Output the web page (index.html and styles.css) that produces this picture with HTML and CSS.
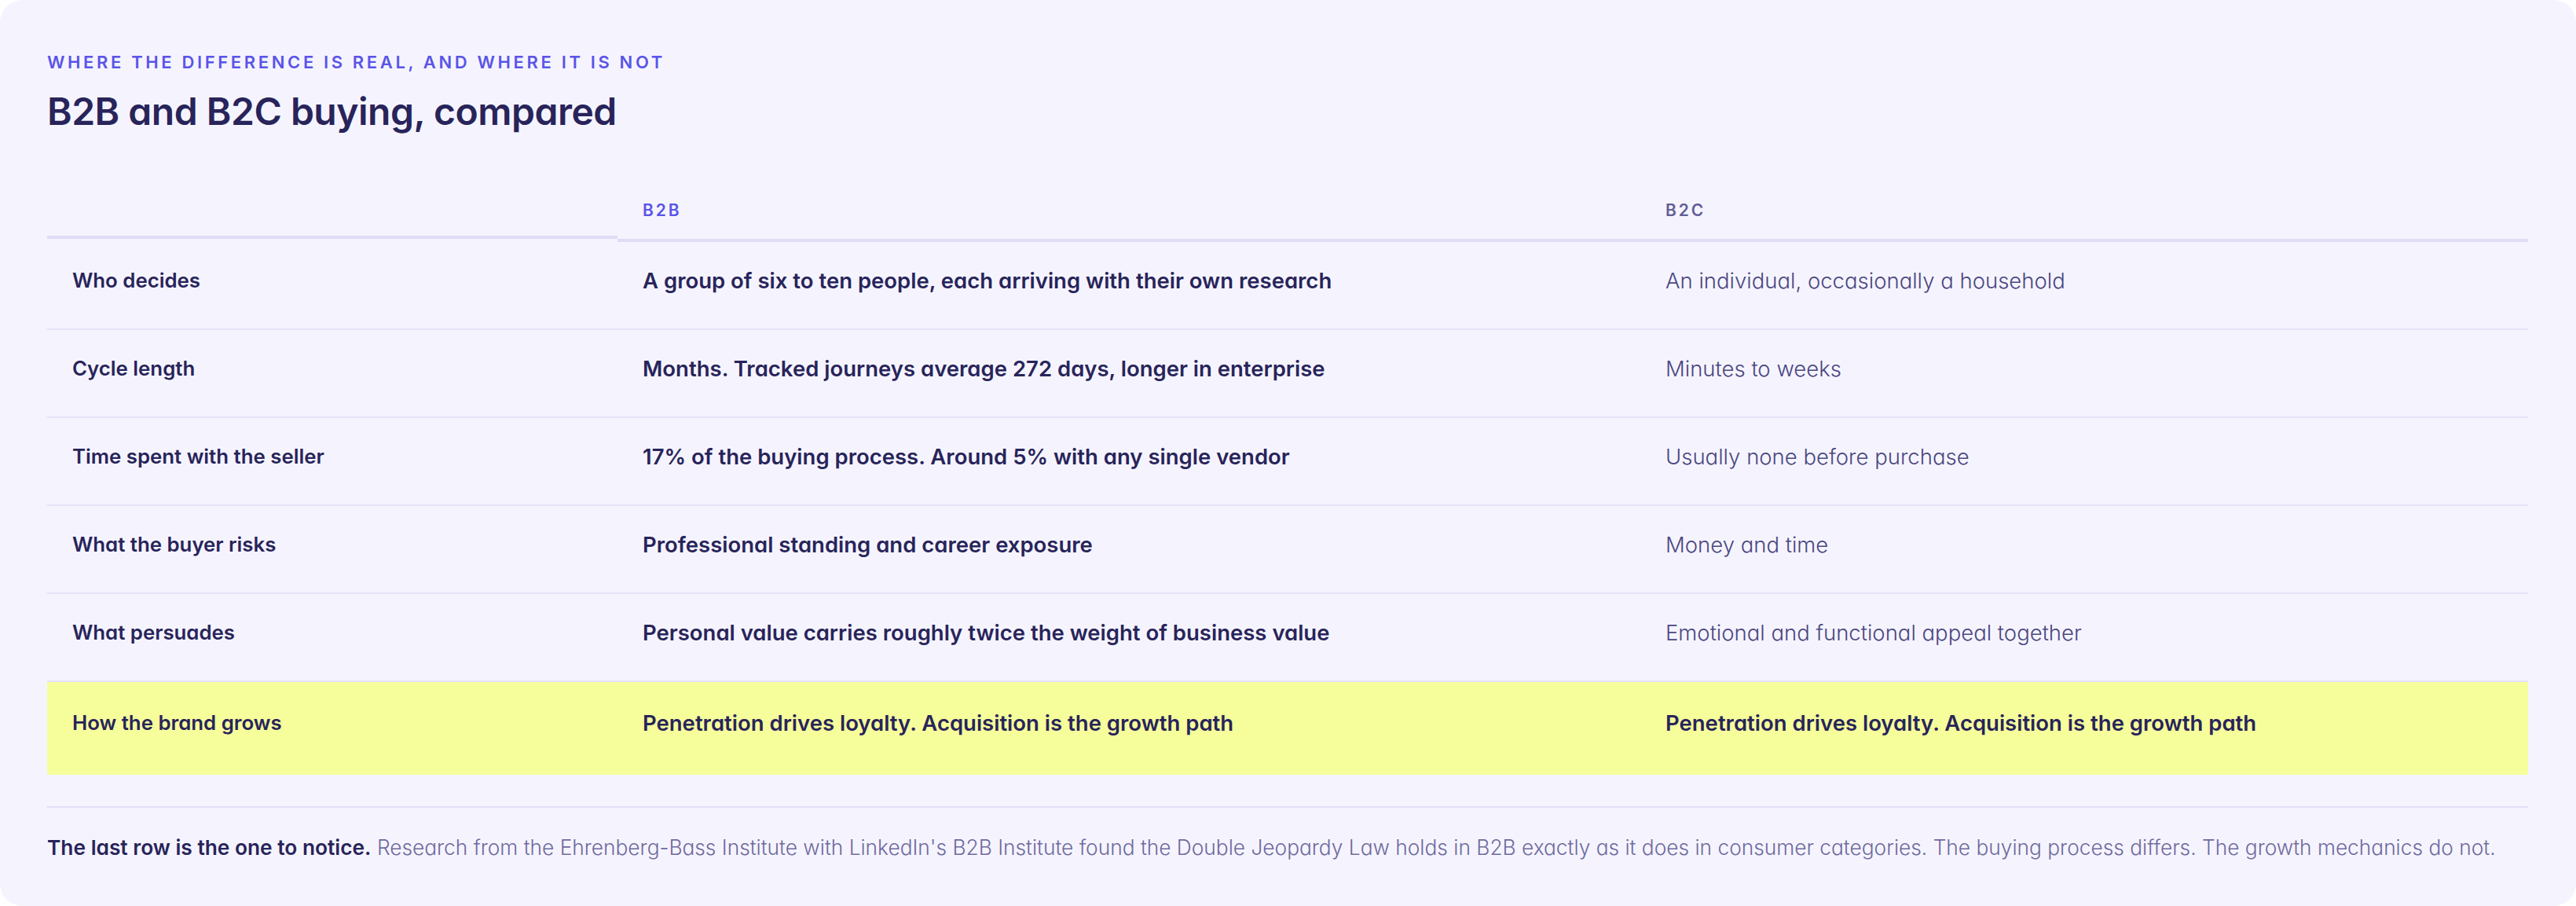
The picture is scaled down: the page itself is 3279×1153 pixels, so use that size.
FILE: index.html
```html
<!DOCTYPE html>
<html lang="en">
<head>
<meta charset="utf-8">
<title>B2B and B2C buying, compared</title>
<link rel="stylesheet" href="styles.css">
</head>
<body>
<section class="card">
  <p class="eyebrow">Where the difference is real, and where it is not</p>
  <h1 class="title">B2B and B2C buying, compared</h1>
  <div class="table">
    <div class="row head">
      <div class="cell hlabel"></div>
      <div class="cell hb2b">B2B</div>
      <div class="cell hb2c">B2C</div>
    </div>
    <div class="row">
      <div class="cell label">Who decides</div>
      <div class="cell b2b">A group of six to ten people, each arriving with their own research</div>
      <div class="cell b2c">An individual, occasionally a household</div>
    </div>
    <div class="row">
      <div class="cell label">Cycle length</div>
      <div class="cell b2b">Months. Tracked journeys average 272 days, longer in enterprise</div>
      <div class="cell b2c">Minutes to weeks</div>
    </div>
    <div class="row">
      <div class="cell label">Time spent with the seller</div>
      <div class="cell b2b">17% of the buying process. Around 5% with any single vendor</div>
      <div class="cell b2c">Usually none before purchase</div>
    </div>
    <div class="row">
      <div class="cell label">What the buyer risks</div>
      <div class="cell b2b">Professional standing and career exposure</div>
      <div class="cell b2c">Money and time</div>
    </div>
    <div class="row">
      <div class="cell label">What persuades</div>
      <div class="cell b2b">Personal value carries roughly twice the weight of business value</div>
      <div class="cell b2c">Emotional and functional appeal together</div>
    </div>
    <div class="row highlight">
      <div class="cell label">How the brand grows</div>
      <div class="cell b2b">Penetration drives loyalty. Acquisition is the growth path</div>
      <div class="cell b2c strong">Penetration drives loyalty. Acquisition is the growth path</div>
    </div>
  </div>
  <p class="note"><strong>The last row is the one to notice.</strong> Research from the Ehrenberg-Bass Institute with LinkedIn's B2B Institute found the Double Jeopardy Law holds in B2B exactly as it does in consumer categories. The buying process differs. The growth mechanics do not.</p>
</section>
</body>
</html>
```

FILE: styles.css
```css
html, body {
  margin: 0;
  padding: 0;
  background: #ffffff;
}

body {
  font-family: "Inter", "Liberation Sans", sans-serif;
  font-feature-settings: "cv11";
  color: #28245a;
}

.card {
  box-sizing: border-box;
  width: 3279px;
  height: 1153px;
  background: #f5f4fe;
  border-radius: 28px;
  padding: 66px 61px 0 60px;
}

.eyebrow {
  margin: 0;
  font-size: 22px;
  line-height: 26px;
  font-weight: 600;
  letter-spacing: 0.165em;
  text-transform: uppercase;
  color: #5a54e8;
}

.title {
  margin: 22px 0 0;
  font-size: 48px;
  line-height: 56px;
  font-weight: 600;
  letter-spacing: -0.01em;
  color: #28245a;
}

.table {
  margin-top: 50px;
}

.row {
  display: grid;
  grid-template-columns: 726px 1302px 1fr;
  align-items: start;
}

.cell {
  padding: 33px 32px 45px;
  font-size: 27.5px;
  line-height: 32px;
  border-bottom: 2px solid #e5e2f8;
}

.head .cell {
  padding: 36px 32px 24px;
  font-size: 21px;
  line-height: 24px;
  font-weight: 600;
  letter-spacing: 0.14em;
  border-bottom: 4px solid #dfdcf6;
}

.head .hlabel {
  padding-bottom: 20px;
  height: 24px;
}

.hb2b { color: #5a54e8; }
.hb2c { color: #635e96; }

.label {
  font-size: 25.8px;
  font-weight: 600;
  color: #28245a;
}

.b2b {
  font-weight: 600;
  color: #28245a;
}

.b2c {
  font-weight: 300;
  color: #4b4781;
}

.highlight {
  background: #f6fe9b;
}

.highlight .cell {
  border-bottom: none;
  padding: 36px 32px 50px;
}

.highlight .strong {
  font-weight: 600;
  color: #28245a;
}

.note {
  margin: 40px 0 0;
  border-top: 2px solid #e2dff8;
  padding-top: 35px;
  font-size: 26.3px;
  line-height: 32px;
  font-weight: 300;
  color: #6f6a9e;
}

.note strong {
  font-weight: 600;
  color: #28245a;
}
```
